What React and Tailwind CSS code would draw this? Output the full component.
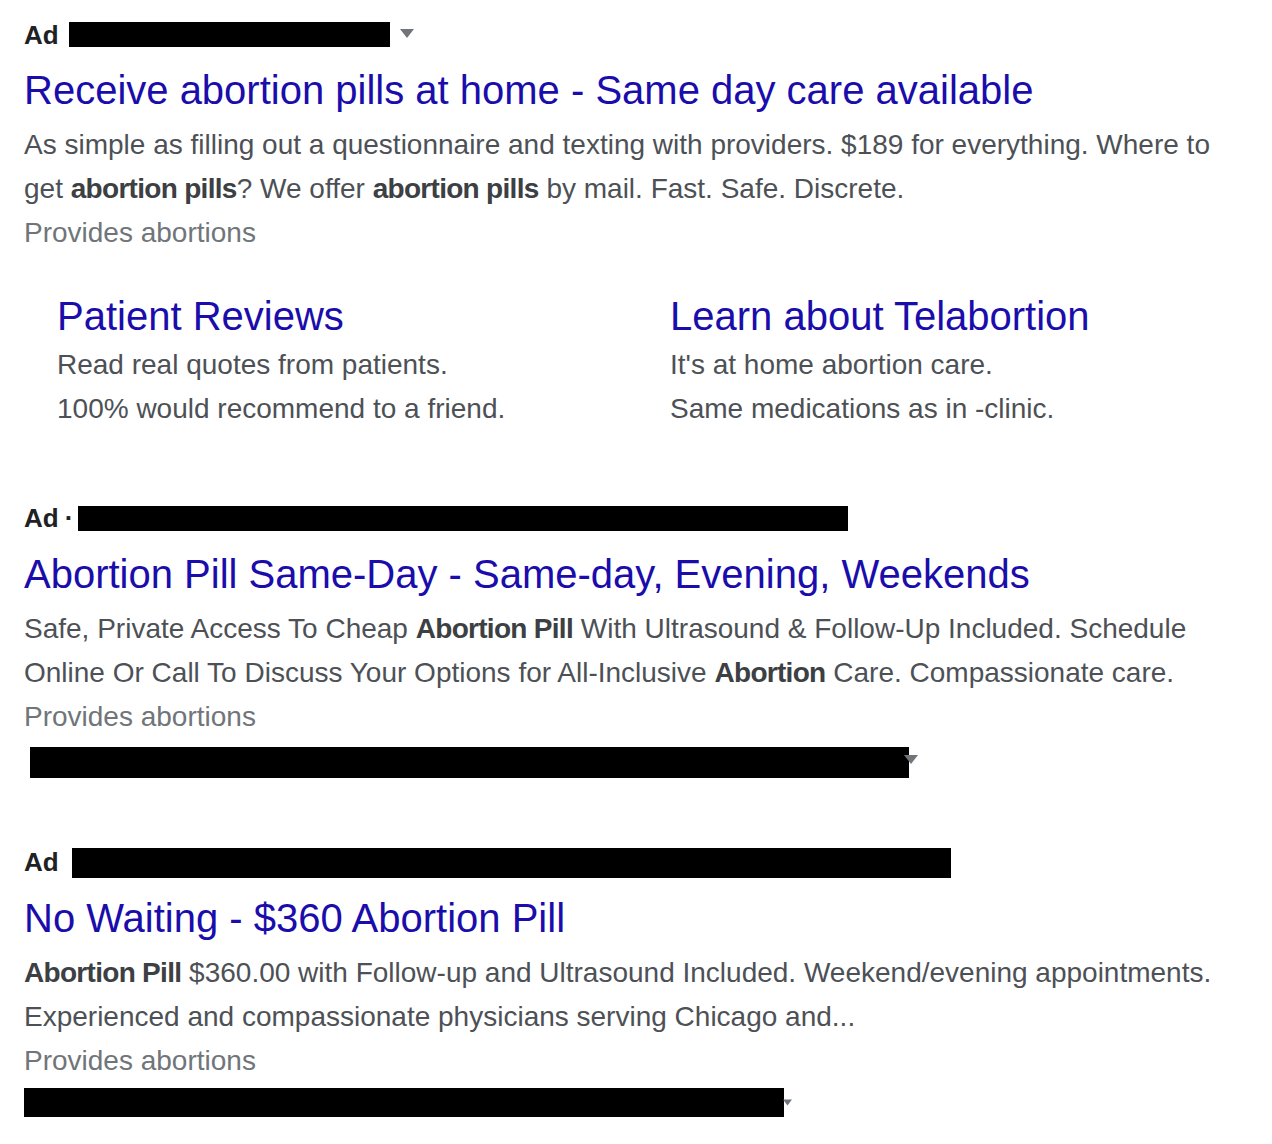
import React from 'react';

const FONT = { fontFamily: "'Liberation Sans', Arial, sans-serif" };

function Caret({ className = '' }) {
    return (
        <svg width="14" height="9" viewBox="0 0 14 9" className={className}>
            <path d="M0 0 L14 0 L7 9 Z" fill="#70757a" />
        </svg>
    );
}

function AdLabel({ dot, barClass, caret }) {
    return (
        <div className="h-[44px] flex items-center">
            <span className="text-[26px] font-bold text-[#202124]">Ad</span>
            {dot && <span className="text-[26px] font-bold text-[#202124] ml-[6px] mr-[5px]">·</span>}
            <div className={barClass} />
            {caret && <Caret className="ml-[10px] -mt-[3px]" />}
        </div>
    );
}

function Title({ children, className = 'mt-[7px]' }) {
    return (
        <div className={`${className} h-[52px] leading-[52px] text-[40px] text-[#1a0dab] whitespace-nowrap`}>
            {children}
        </div>
    );
}

function Body({ children }) {
    return (
        <div className="mt-[7px] text-[28px] leading-[44px] text-[#4d5156] pr-[30px]">
            {children}
        </div>
    );
}

function B({ children }) {
    return <b className="text-[#3c4043] tracking-[-0.7px]">{children}</b>;
}

function Provides() {
    return <div className="text-[28px] leading-[44px] text-[#70757a]">Provides abortions</div>;
}

export default function App() {
    return (
        <div className="bg-white w-[1272px] h-[1144px] overflow-hidden pl-[24px] pt-[13px]" style={FONT}>
            {/* first ad */}
            <AdLabel barClass="bg-black w-[321px] h-[25px] ml-[10px] -mt-[2px]" caret />
            <Title>Receive abortion pills at home - Same day care available</Title>
            <Body>
                As simple as filling out a questionnaire and texting with providers. $189 for everything. Where to
                get <B>abortion pills</B>? We offer <B>abortion pills</B> by mail. Fast. Safe. Discrete.
            </Body>
            <Provides />

            <div className="grid grid-cols-[613px_1fr] ml-[33px] mt-[35px]">
                <div>
                    <div className="h-[52px] leading-[52px] text-[40px] text-[#1a0dab]">Patient Reviews</div>
                    <div className="text-[28px] leading-[44px] text-[#4d5156] mt-[1px]">Read real quotes from patients.</div>
                    <div className="text-[28px] leading-[44px] text-[#4d5156]">100% would recommend to a friend.</div>
                </div>
                <div>
                    <div className="h-[52px] leading-[52px] text-[40px] text-[#1a0dab]">Learn about Telabortion</div>
                    <div className="text-[28px] leading-[44px] text-[#4d5156] mt-[1px]">It's at home abortion care.</div>
                    <div className="text-[28px] leading-[44px] text-[#4d5156]">Same medications as in -clinic.</div>
                </div>
            </div>

            {/* second ad */}
            <div className="mt-[65px]">
                <AdLabel dot barClass="bg-black w-[770px] h-[25px] mt-[1px]" />
                <Title className="mt-[8px]">Abortion Pill Same-Day - Same-day, Evening, Weekends</Title>
                <Body>
                    Safe, Private Access To Cheap <B>Abortion Pill</B> With Ultrasound &amp; Follow-Up Included. Schedule
                    Online Or Call To Discuss Your Options for All-Inclusive <B>Abortion</B> Care. Compassionate care.
                </Body>
                <Provides />
                <div className="flex items-start mt-[8px] ml-[6px]">
                    <div className="bg-black w-[879px] h-[31px]" />
                    <Caret className="-ml-[5px] mt-[8px]" />
                </div>
            </div>

            {/* third ad */}
            <div className="mt-[62px]">
                <AdLabel barClass="bg-black w-[879px] h-[30px] ml-[13px] mt-[2px]" />
                <Title className="mt-[8px]">No Waiting - $360 Abortion Pill</Title>
                <Body>
                    <B>Abortion Pill</B> $360.00 with Follow-up and Ultrasound Included. Weekend/evening appointments.
                    Experienced and compassionate physicians serving Chicago and...
                </Body>
                <Provides />
                <div className="flex items-start mt-[5px]">
                    <div className="bg-black w-[760px] h-[29px]" />
                    <Caret className="mt-[10px] -ml-[1px] w-[9px]" />
                </div>
            </div>
        </div>
    );
}
